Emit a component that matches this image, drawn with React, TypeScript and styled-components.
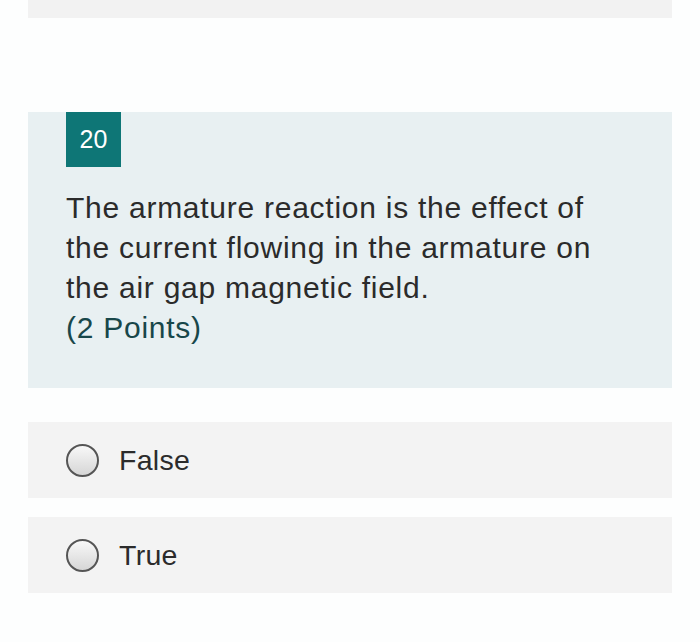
import React from "react";
import styled, { createGlobalStyle } from "styled-components";

const Global = createGlobalStyle`
  html, body { margin: 0; padding: 0; background: #fdfefe; }
  body { font-family: "Liberation Sans", Arial, sans-serif; }
`;

const Page = styled.div`
  width: 700px;
  height: 642px;
  padding: 0 28px;
  box-sizing: border-box;
  display: flex;
  flex-direction: column;
`;

const TopBar = styled.div`
  height: 18px;
  background: #f2f2f2;
`;

const Card = styled.section`
  margin-top: 94px;
  height: 276px;
  background: #e8f0f2;
  padding: 0 38px;
  box-sizing: border-box;
  display: flex;
  flex-direction: column;
  align-items: flex-start;
`;

const Badge = styled.div`
  width: 55px;
  height: 55px;
  background: #0e7676;
  color: #ffffff;
  font-size: 25px;
  display: flex;
  align-items: center;
  justify-content: center;
`;

const Question = styled.p`
  margin: 21px 0 0;
  font-size: 30px;
  line-height: 40px;
  letter-spacing: 0.74px;
  color: #2b2b2b;
`;

const Points = styled.span`
  display: block;
  color: #18474a;
`;

const Options = styled.div`
  margin-top: 34px;
  display: flex;
  flex-direction: column;
  gap: 19px;
`;

const Option = styled.label`
  height: 76px;
  background: #f3f3f3;
  display: flex;
  align-items: center;
  padding-left: 38px;
  gap: 20px;
  font-size: 28.5px;
  letter-spacing: 0.3px;
  color: #2b2b2b;
`;

const Radio = styled.span`
  width: 29px;
  height: 29px;
  border-radius: 50%;
  border: 2px solid #555555;
  background: linear-gradient(180deg, #f8f8f8 0%, #d6d6d6 100%);
  flex: none;
`;

export default function App() {
  return (
    <>
      <Global />
      <Page>
        <TopBar />
        <Card>
          <Badge>20</Badge>
          <Question>
            The armature reaction is the effect of
            <br />
            the current flowing in the armature on
            <br />
            the air gap magnetic field.
            <Points>(2 Points)</Points>
          </Question>
        </Card>
        <Options>
          <Option>
            <Radio />
            False
          </Option>
          <Option>
            <Radio />
            True
          </Option>
        </Options>
      </Page>
    </>
  );
}
